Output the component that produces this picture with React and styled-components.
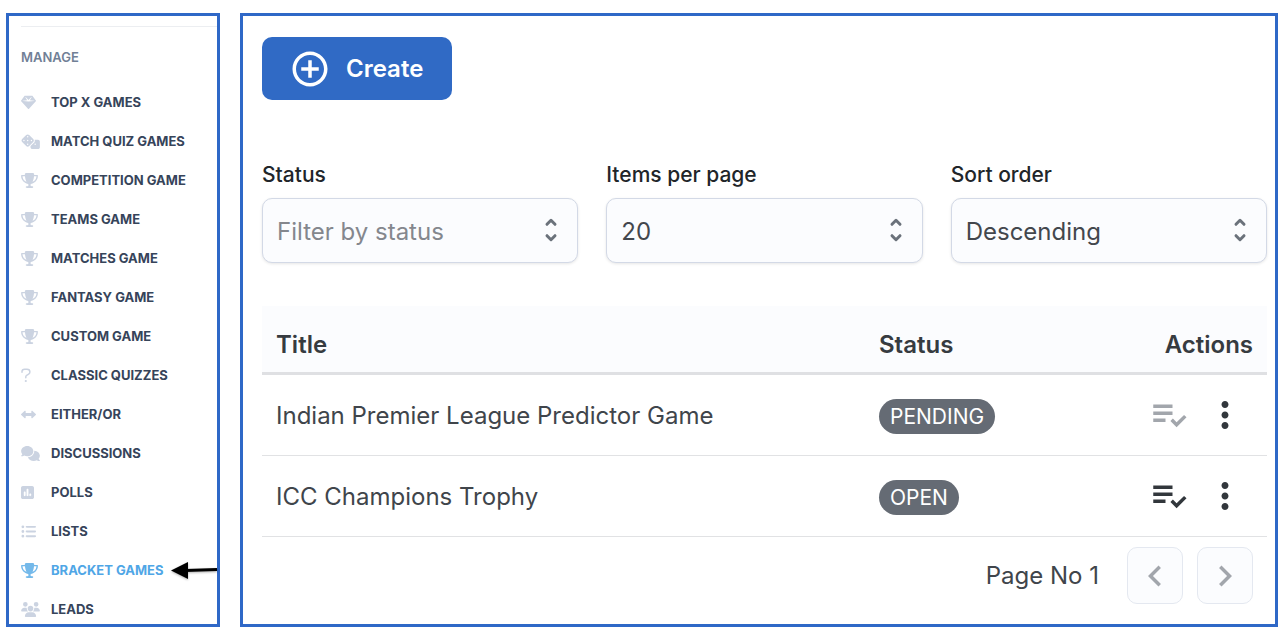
import React from "react"
import styled, { createGlobalStyle } from "styled-components"
import {
  FaComments,
  FaDice,
  FaGem,
  FaLeftRight,
  FaListUl,
  FaSquarePollVertical,
  FaTrophy,
  FaUsers,
} from "react-icons/fa6"
import {
  MdChevronLeft,
  MdChevronRight,
  MdControlPoint,
  MdMoreVert,
  MdPlaylistAddCheck,
} from "react-icons/md"

const QuestionIcon = () => (
  <svg viewBox="0 0 10 15" fill="none" aria-hidden="true">
    <path
      d="M1 4.2 V3.6 C1 2 2.2 1.2 3.6 1.2 H6 C7.8 1.2 8.9 2.4 8.9 3.9 C8.9 5 8.3 5.8 7.3 6.4 L5.6 7.4 C5 7.8 4.8 8.2 4.8 8.8 V9.8"
      stroke="currentColor"
      strokeWidth="1.5"
      strokeLinecap="round"
    />
    <circle cx="4.8" cy="13" r="1.1" fill="currentColor" />
  </svg>
)

const menu = [
  { label: "Top X Games", icon: FaGem, width: 15 },
  { label: "Match Quiz Games", icon: FaDice, width: 19 },
  { label: "Competition Game", icon: FaTrophy, width: 17 },
  { label: "Teams Game", icon: FaTrophy, width: 17 },
  { label: "Matches Game", icon: FaTrophy, width: 17 },
  { label: "Fantasy Game", icon: FaTrophy, width: 17 },
  { label: "Custom Game", icon: FaTrophy, width: 17 },
  { label: "Classic Quizzes", icon: QuestionIcon, width: 10 },
  { label: "Either/Or", icon: FaLeftRight, width: 15 },
  { label: "Discussions", icon: FaComments, width: 19 },
  { label: "Polls", icon: FaSquarePollVertical, width: 13 },
  { label: "Lists", icon: FaListUl, width: 15 },
  { label: "Bracket Games", icon: FaTrophy, width: 17, active: true },
  { label: "Leads", icon: FaUsers, width: 19 },
]

const filters = [
  {
    id: "status",
    label: "Status",
    options: ["Filter by status", "Pending", "Open"],
    placeholder: true,
  },
  { id: "items", label: "Items per page", options: ["20", "50", "100"] },
  { id: "sort", label: "Sort order", options: ["Descending", "Ascending"] },
]

const games = [
  {
    title: "Indian Premier League Predictor Game",
    status: "PENDING",
    disabled: true,
  },
  { title: "ICC Champions Trophy", status: "OPEN", disabled: false },
]

const PointerArrow = () => (
  <ArrowStyle viewBox="0 0 46 20" aria-hidden="true">
    <path d="M14 10.5 L46 9.5" stroke="#000" strokeWidth="3" />
    <path d="M0 10.5 L17 2 V19 Z" fill="#000" />
  </ArrowStyle>
)

const Filter = ({ id, label, options, placeholder }) => (
  <FilterStyle>
    <FilterLabel htmlFor={id}>{label}</FilterLabel>
    <SelectWrapper>
      <Select id={id} $placeholder={placeholder}>
        {options.map((option) => (
          <option key={option}>{option}</option>
        ))}
      </Select>
      <SelectIcon viewBox="0 0 14 26" aria-hidden="true">
        <path d="M3 7.3 L7 3.3 L11 7.3 M3 18.7 L7 22.7 L11 18.7" />
      </SelectIcon>
    </SelectWrapper>
  </FilterStyle>
)

const App = () => (
  <>
    <GlobalStyle />
    <Page>
      <Sidebar>
        <Divider />
        <SidebarTitle>Manage</SidebarTitle>
        <Menu>
          {menu.map(({ label, icon: Icon, width, active }) => (
            <MenuItem key={label}>
              <MenuLink href="#" $active={active}>
                <MenuIcon $width={width}>
                  <Icon />
                </MenuIcon>
                {label}
              </MenuLink>
              {active && <PointerArrow />}
            </MenuItem>
          ))}
        </Menu>
      </Sidebar>
      <Main>
        <CreateButton type="button">
          <MdControlPoint />
          Create
        </CreateButton>
        <Filters>
          {filters.map((filter) => (
            <Filter key={filter.id} {...filter} />
          ))}
        </Filters>
        <Table>
          <thead>
            <tr>
              <HeadCell $width="60%">Title</HeadCell>
              <HeadCell>Status</HeadCell>
              <HeadCell $align="right">Actions</HeadCell>
            </tr>
          </thead>
          <tbody>
            {games.map(({ title, status, disabled }) => (
              <tr key={title}>
                <Cell>{title}</Cell>
                <Cell>
                  <Badge>{status}</Badge>
                </Cell>
                <Cell>
                  <Actions>
                    <IconButton
                      type="button"
                      aria-label="Results"
                      disabled={disabled}
                    >
                      <MdPlaylistAddCheck />
                    </IconButton>
                    <IconButton type="button" aria-label="More">
                      <MdMoreVert />
                    </IconButton>
                  </Actions>
                </Cell>
              </tr>
            ))}
          </tbody>
        </Table>
        <Pagination>
          <PageNumber>Page No 1</PageNumber>
          <PageButton type="button" aria-label="Previous page" disabled>
            <MdChevronLeft />
          </PageButton>
          <PageButton type="button" aria-label="Next page" disabled>
            <MdChevronRight />
          </PageButton>
        </Pagination>
      </Main>
    </Page>
  </>
)

const GlobalStyle = createGlobalStyle`
  * {
    box-sizing: border-box;
  }
  body {
    margin: 0;
    background: #fff;
    font-family: Inter, "Liberation Sans", sans-serif;
  }
  button,
  select {
    font-family: inherit;
  }
`

const Page = styled.div`
  display: flex;
  gap: 20px;
  padding: 13px 8px 7px 6px;
`

const Sidebar = styled.nav`
  flex: 0 0 214px;
  border: 3px solid #2f68c7;
  padding: 10px 0 4px 12px;
`

const Divider = styled.hr`
  height: 1px;
  margin: 0 0 20px;
  border: 0;
  background: #eceef1;
`

const SidebarTitle = styled.h2`
  margin: 0 0 25px;
  color: #718096;
  font-size: 13px;
  font-weight: 600;
  line-height: 20px;
  text-transform: uppercase;
`

const Menu = styled.ul`
  display: flex;
  flex-direction: column;
  gap: 19px;
  margin: 0;
  padding: 0;
  list-style: none;
`

const MenuItem = styled.li`
  display: flex;
  align-items: center;
  justify-content: space-between;
  height: 20px;
`

const MenuLink = styled.a`
  display: flex;
  align-items: center;
  color: ${({ $active }) => ($active ? "#4fa6e6" : "#36445a")};
  font-size: 13px;
  font-weight: 700;
  line-height: 20px;
  text-decoration: none;
  text-transform: uppercase;

  svg {
    color: ${({ $active }) => ($active ? "#74b9ea" : "#cbd3e1")};
  }
`

const MenuIcon = styled.span`
  display: flex;
  width: 30px;

  svg {
    width: ${({ $width }) => $width}px;
    height: 15px;
  }
`

const ArrowStyle = styled.svg`
  width: 46px;
  height: 20px;
  filter: drop-shadow(0 1px 1px rgba(0, 0, 0, 0.3));
`

const Main = styled.main`
  flex: 1;
  min-width: 0;
  border: 3px solid #2f68c7;
  padding: 21px 8px 20px 19px;
`

const CreateButton = styled.button`
  display: flex;
  align-items: center;
  gap: 15px;
  height: 63px;
  padding: 0 29px 0 27px;
  border: 0;
  border-radius: 10px;
  background: #306ac5;
  color: #fff;
  font-size: 24px;
  font-weight: 600;

  svg {
    width: 42px;
    height: 42px;
  }
`

const Filters = styled.div`
  display: grid;
  grid-template-columns: repeat(3, 1fr);
  gap: 28px;
  margin: 61px 0 43px;
`

const FilterStyle = styled.div`
  display: flex;
  flex-direction: column;
  gap: 9px;
`

const FilterLabel = styled.label`
  color: #212529;
  font-size: 21px;
  font-weight: 500;
  line-height: 28px;
`

const SelectWrapper = styled.div`
  position: relative;
`

const Select = styled.select`
  display: block;
  width: 100%;
  height: 65px;
  padding: 2px 48px 0 14px;
  border: 1px solid #d3d9e6;
  border-radius: 10px;
  background: #fbfcfe;
  box-shadow: 0 1px 3px rgba(0, 0, 0, 0.1);
  color: ${({ $placeholder }) => ($placeholder ? "#84878d" : "#43474d")};
  font-size: 24px;
  appearance: none;
`

const SelectIcon = styled.svg`
  position: absolute;
  top: 19px;
  right: 20px;
  width: 14px;
  height: 26px;
  fill: none;
  stroke: #6b727b;
  stroke-width: 3;
  stroke-linecap: round;
  stroke-linejoin: round;
  pointer-events: none;
`

const Table = styled.table`
  width: 100%;
  border-spacing: 0;
  color: #40454b;
  font-size: 24px;
`

const HeadCell = styled.th`
  width: ${({ $width }) => $width || "auto"};
  height: 69px;
  padding: 10px 14px 0;
  border-bottom: 3px solid #dfe0e3;
  background: #fbfcfe;
  color: #363b40;
  font-weight: 600;
  text-align: ${({ $align }) => $align || "left"};
`

const Cell = styled.td`
  height: 81px;
  padding: 0 14px;
  border-bottom: 1px solid #e1e2e4;
`

const Badge = styled.span`
  display: inline-block;
  margin-top: 2px;
  padding: 0 11px;
  border-radius: 18px;
  background: #656b74;
  color: #fff;
  font-size: 21px;
  line-height: 35px;
`

const Actions = styled.div`
  display: flex;
  justify-content: flex-end;
`

const IconButton = styled.button`
  display: flex;
  padding: 0 7px;
  border: 0;
  background: none;
  color: #32373c;

  &:disabled {
    color: #a2a6ac;
  }

  svg {
    width: 42px;
    height: 42px;
  }
`

const Pagination = styled.div`
  display: flex;
  align-items: center;
  justify-content: flex-end;
  gap: 14px;
  padding: 10px 14px 0;
`

const PageNumber = styled.span`
  margin-right: 14px;
  color: #40454b;
  font-size: 24px;
`

const PageButton = styled.button`
  display: flex;
  align-items: center;
  justify-content: center;
  width: 56px;
  height: 57px;
  padding: 0;
  border: 1px solid #e4e8f0;
  border-radius: 10px;
  background: #fbfcfe;
  color: #a2a6ac;

  svg {
    width: 42px;
    height: 42px;
  }
`

export default App
